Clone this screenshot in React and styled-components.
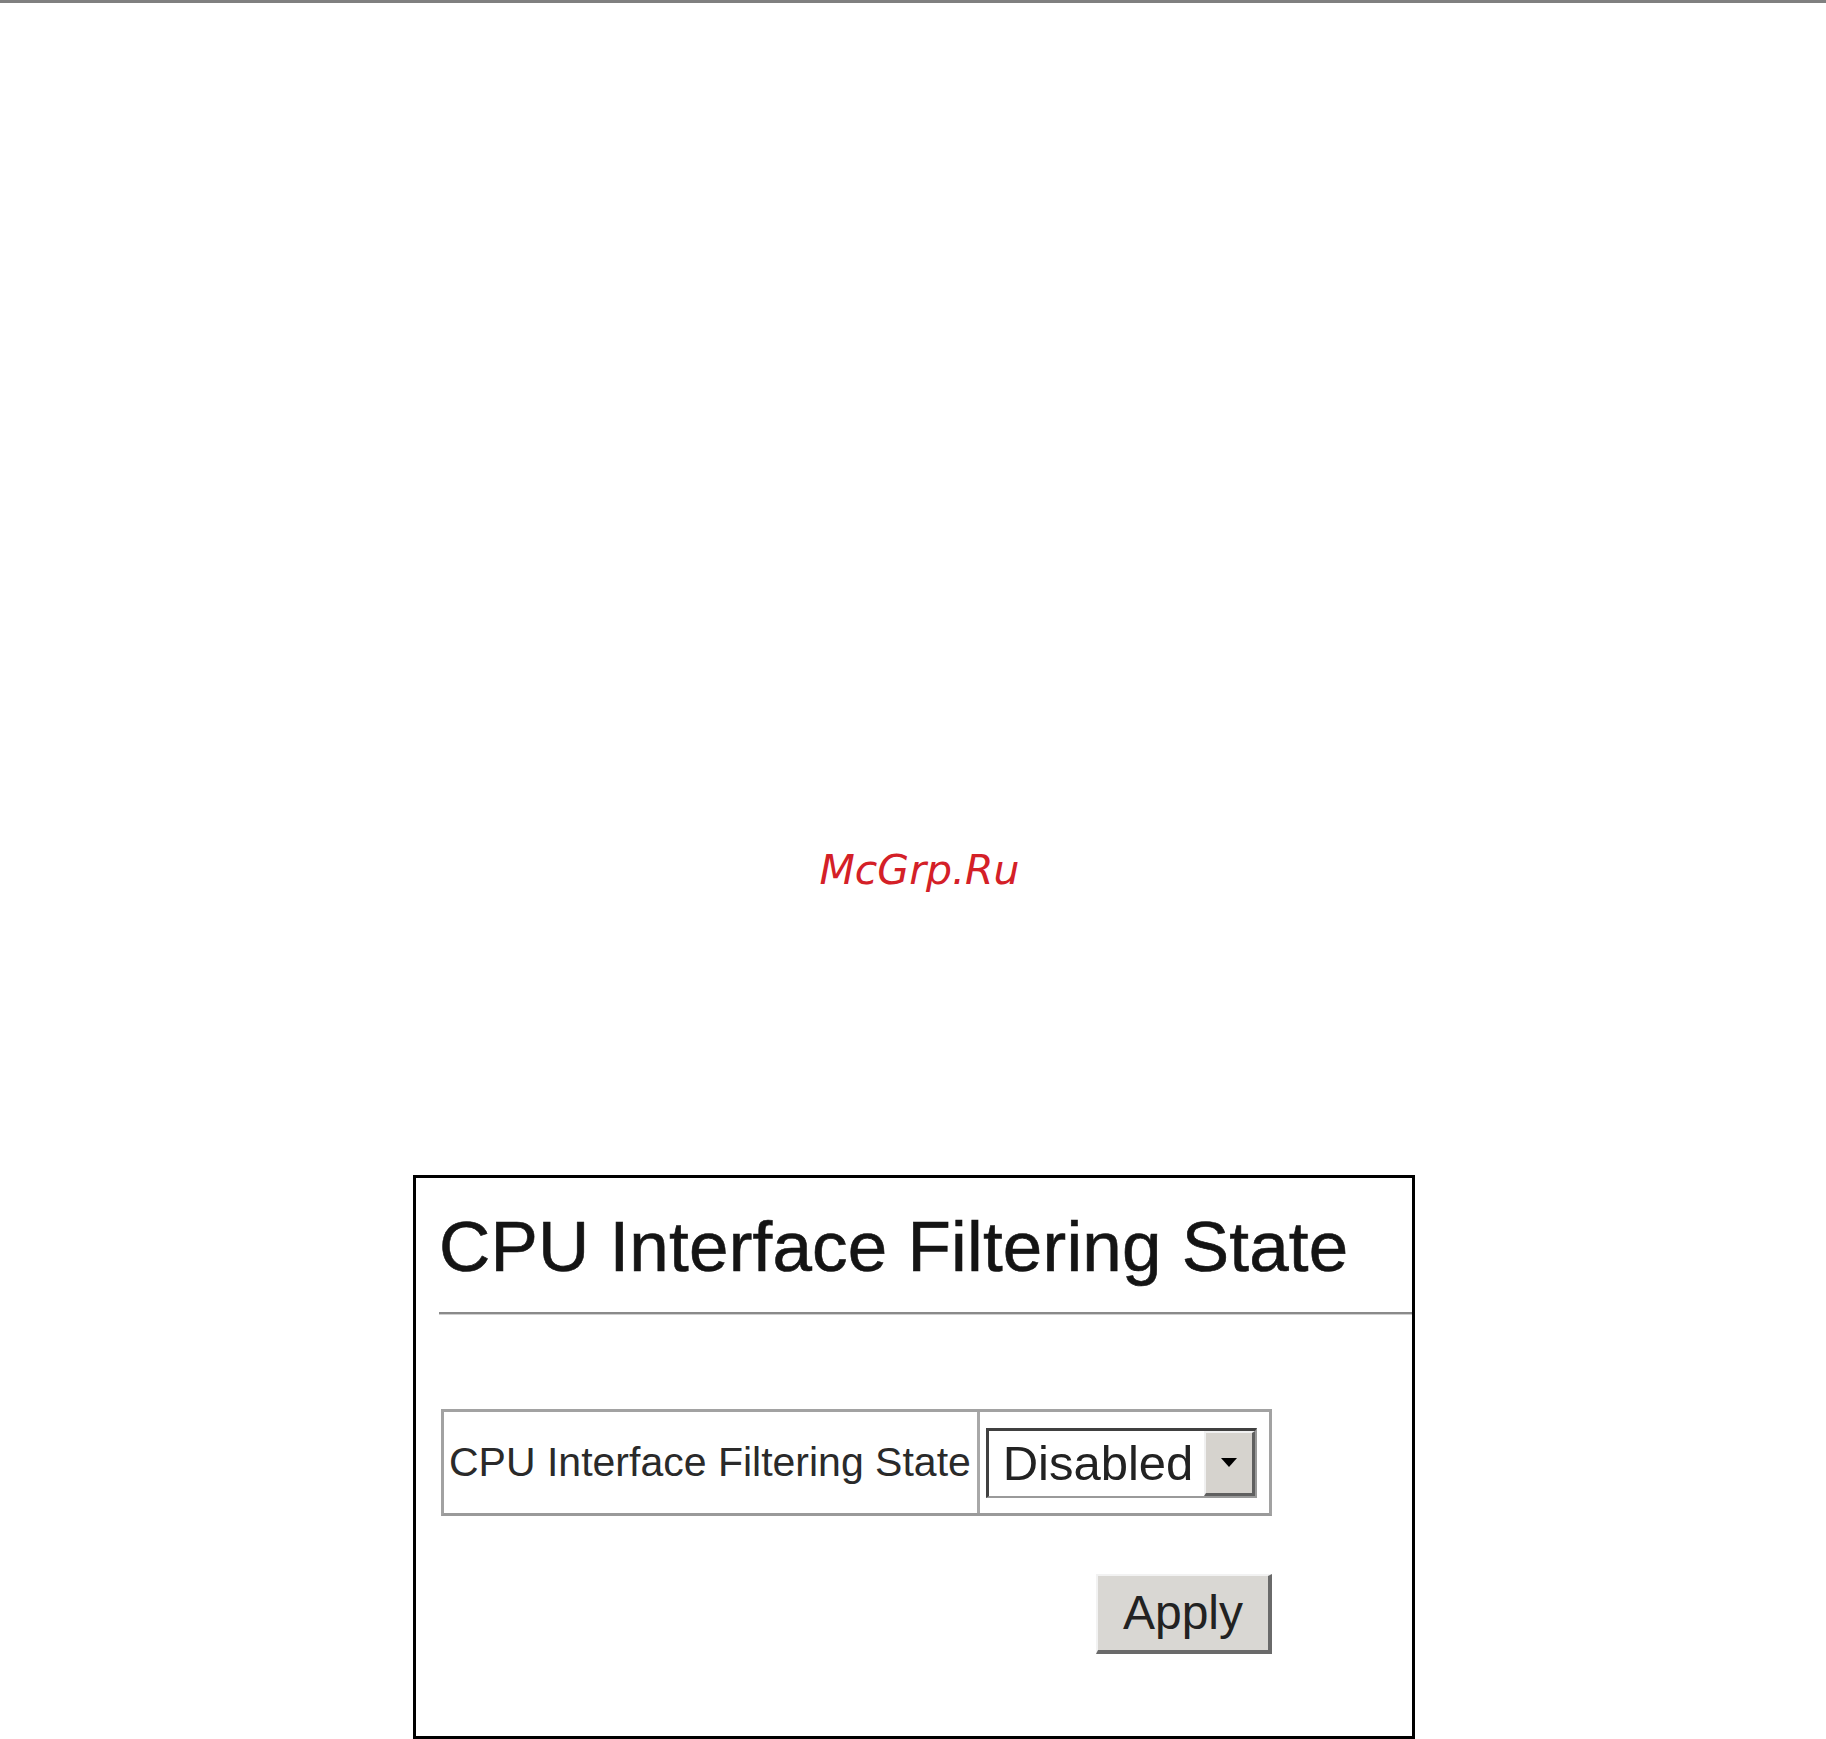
import React from "react";
import styled, { createGlobalStyle } from "styled-components";

const GlobalStyle = createGlobalStyle`
  html, body {
    margin: 0;
    padding: 0;
    background: #ffffff;
  }
  body {
    width: 1826px;
    height: 1739px;
    overflow: hidden;
    font-family: "Liberation Sans", Arial, sans-serif;
  }
`;

const Page = styled.div`
  display: flex;
  flex-direction: column;
  width: 1826px;
  height: 1739px;
`;

const TopBar = styled.div`
  height: 3px;
  background: #808080;
`;

const Watermark = styled.div`
  margin-top: 844px;
  padding-left: 13px;
  text-align: center;
  font-family: "DejaVu Sans", Verdana, sans-serif;
  font-style: italic;
  font-size: 41px;
  line-height: 46px;
  color: #d42027;
`;

const Frame = styled.div`
  margin-top: 282px;
  margin-left: 413px;
  width: 996px;
  flex: 1;
  border: 3px solid #000;
  display: flex;
  flex-direction: column;
`;

const Title = styled.h1`
  margin: 33px 0 0 23px;
  font-size: 71px;
  font-weight: normal;
  line-height: 71px;
  color: #141414;
  letter-spacing: 0.2px;
  -webkit-text-stroke: 0.6px #141414;
`;

const Rule = styled.div`
  margin: 30px 0 0 23px;
  height: 0;
  border-top: 2px solid #8a8a8a;
  border-bottom: 1px solid #cfcfcf;
`;

const Form = styled.div`
  margin: 94px 0 0 25px;
  width: 831px;
  display: flex;
  flex-direction: column;
  align-items: flex-end;
`;

const Table = styled.div`
  align-self: stretch;
  height: 101px;
  display: flex;
  border: 3px solid #a2a2a2;
  border-bottom-color: #9a9a9a;
`;

const Cell = styled.div`
  display: flex;
  align-items: center;
  padding: 0 ${(p) => p.$pad}px;
  width: ${(p) => p.$width}px;
  border-right: ${(p) => (p.$divider ? "3px solid #a8a8a8" : "none")};
`;

const Label = styled.span`
  font-size: 41px;
  color: #2a2a2a;
  white-space: nowrap;
`;

const Select = styled.div`
  margin-left: 3px;
  width: 266px;
  height: 65px;
  display: flex;
  align-items: stretch;
  border-top: 3px solid #404040;
  border-left: 3px solid #404040;
  border-right: 2px solid #9a9a9a;
  border-bottom: 2px solid #9a9a9a;
  background: #fff;
`;

const Value = styled.span`
  flex: 1;
  display: flex;
  align-items: center;
  padding-left: 14px;
  font-size: 49px;
  color: #222;
  white-space: nowrap;
  overflow: hidden;
`;

const ArrowButton = styled.div`
  width: 46px;
  flex-shrink: 0;
  display: flex;
  align-items: center;
  justify-content: center;
  background: #d6d3ce;
  border-left: 2px solid #f0f0f0;
  border-top: 2px solid #f0f0f0;
  border-right: 3px solid #606060;
  border-bottom: 3px solid #606060;
`;

const Apply = styled.button`
  margin-top: 58px;
  width: 176px;
  height: 80px;
  padding: 0;
  background: #d9d7d3;
  border-top: 2px solid #f2f2f2;
  border-left: 2px solid #f2f2f2;
  border-right: 4px solid #6a6a6a;
  border-bottom: 4px solid #6a6a6a;
  font-family: "Liberation Sans", Arial, sans-serif;
  font-size: 48px;
  color: #222;
  line-height: 1;
`;

const App = () => {
  return (
    <>
      <GlobalStyle />
      <Page>
        <TopBar />
        <Watermark>McGrp.Ru</Watermark>
        <Frame>
          <Title>CPU Interface Filtering State</Title>
          <Rule />
          <Form>
            <Table>
              <Cell $width={533} $pad={5} $divider>
                <Label>CPU Interface Filtering State</Label>
              </Cell>
              <Cell $width={289} $pad={3}>
                <Select>
                  <Value>Disabled</Value>
                  <ArrowButton>
                    <svg width="16" height="9" viewBox="0 0 16 9">
                      <path d="M0 0 L16 0 L8 9 Z" fill="#000" />
                    </svg>
                  </ArrowButton>
                </Select>
              </Cell>
            </Table>
            <Apply>Apply</Apply>
          </Form>
        </Frame>
      </Page>
    </>
  );
};

export default App;
